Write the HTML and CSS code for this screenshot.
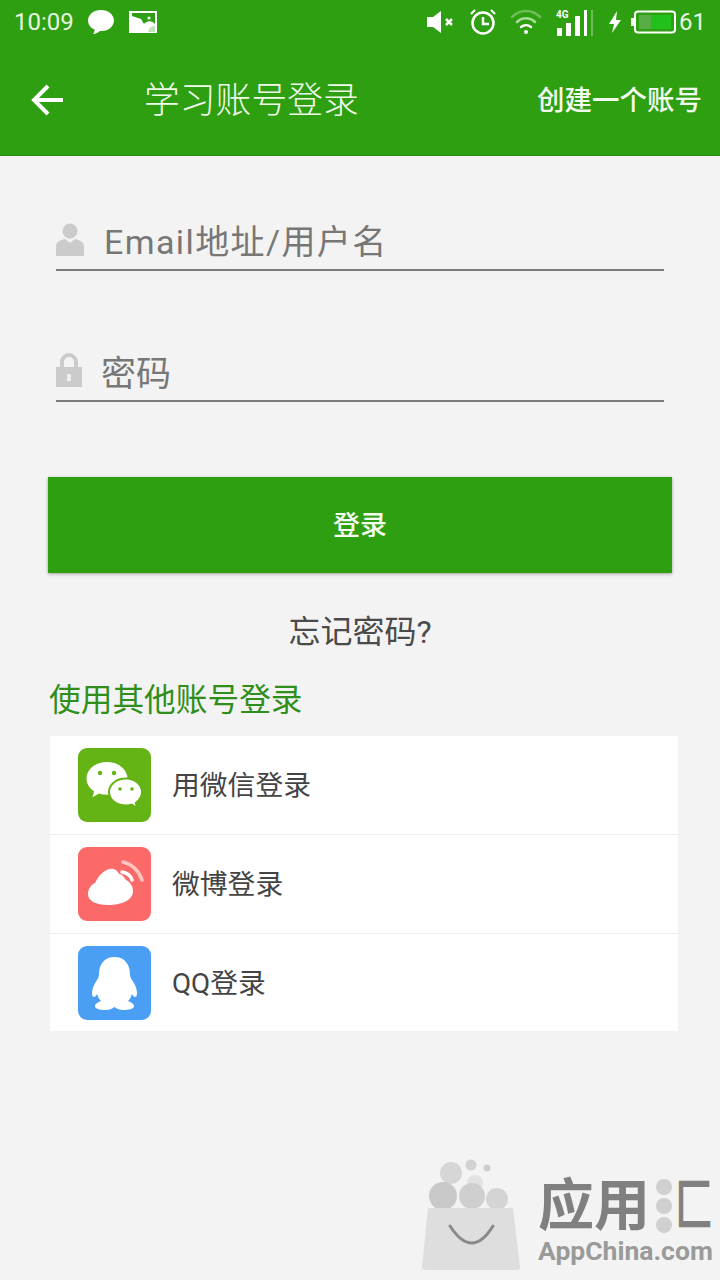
FILE: index.html

```html
<!DOCTYPE html>
<html lang="zh-CN">
<head>
    <meta charset="UTF-8">
    <meta name="viewport" content="width=device-width, initial-scale=1.0">
    <title>学习账号登录</title>
    <link rel="stylesheet" href="styles.css">
</head>
<body>
<div id="wrapper">

    <div class="header">
        <div class="status-bar">
            <span class="status-time">10:09</span>
            <svg class="status-icon" width="28" height="26" viewBox="0 0 28 26"><path d="M14 1C6.500 1 1 5.700 1 11.500c0 4 2.600 7.300 6.500 9 .3 1.600-.6 3.300-1.500 4.500 2.700-.2 5.200-1.500 6.800-3.100.6.100 1.100.1 1.700.1 7.300 0 12.500-4.700 12.500-10.500S21.500 1 14 1z" fill="#fff"/></svg>
            <svg class="status-icon status-pic" width="28" height="24" viewBox="0 0 28 24"><path d="M0 1h28v22H0z" fill="#fff"/><path d="M3 3h23v11c-4-4-8-3-11 0l-3-5-9-3z" fill="#2e9f10"/><path d="M19 22c1-4 3-6 7-6v6z" fill="#bfe3b5"/><circle cx="20" cy="8" r="1.600" fill="#fff"/></svg>
            <div class="status-right">
                <svg width="28" height="24" viewBox="0 0 28 24"><path d="M0 7h6l8-6v22l-8-6H0z" fill="#fff"/><path d="M19 9l6 6M25 9l-6 6" stroke="#fff" stroke-width="2.500"/></svg>
                <svg width="28" height="28" viewBox="0 0 28 28" fill="none" stroke="#fff"><circle cx="14" cy="15" r="10.500" stroke-width="2.500"/><path d="M14 9v7h6" stroke-width="2.500"/><path d="M2 6l4-4M26 6l-4-4" stroke-width="2"/></svg>
                <svg class="status-wifi" width="32" height="28" viewBox="0 0 32 28" fill="none" stroke-linecap="round"><path d="M2 9c8-8 20-8 28 0" stroke="#6dbd58" stroke-width="2.500"/><path d="M7 14c5-5 13-5 18 0" stroke="#a8dc9a" stroke-width="2.500"/><path d="M11 19c3-2.500 7-2.500 10 0" stroke="#fff" stroke-width="2.500"/><circle cx="16" cy="24" r="2" fill="#fff"/></svg>
                <svg class="status-signal" width="38" height="28" viewBox="0 0 38 28"><text x="0" y="10" class="signal-label">4G</text><path d="M1 20h5v8H1zM10 15h5v13h-5zM19 8h5v20h-5z" fill="#fff"/><path d="M28 2h3v26h-3z" fill="#fff"/><path d="M35 2h2v26h-2z" fill="#6dbd58"/></svg>
                <svg class="status-bolt" width="14" height="22" viewBox="0 0 14 22"><path d="M9 0L1 13h5l-2 9 9-13H8z" fill="#fff"/></svg>
                <svg class="status-battery" width="46" height="24" viewBox="0 0 46 24" fill="none"><path d="M0 8h3v8H0z" fill="#fff"/><rect x="4" y="1.500" width="40" height="21" rx="3" stroke="#fff" stroke-width="2"/><path d="M20 5h20v14H20z" fill="#22c01a"/><path d="M8 5h12v14H8z" fill="#58ad45"/></svg>
                <span class="status-battery-text">61</span>
            </div>
        </div>
        <div class="app-bar">
            <svg class="back-icon" width="34" height="34" viewBox="0 0 34 34" fill="none" stroke="#fff" stroke-width="4"><path d="M32 17H4M17 3L3 17l14 14"/></svg>
            <div class="app-title">学习账号登录</div>
            <div class="app-action">创建一个账号</div>
        </div>
    </div>

    <div class="login-form">
        <div class="field field-user">
            <svg width="28" height="33" viewBox="0 0 28 33"><circle cx="14" cy="8" r="7.500" fill="#cbcbcb"/><path d="M0 33v-9c0-5 4-7 9-8l5 4 5-4c5 1 9 3 9 8v9z" fill="#cbcbcb"/></svg>
            <span class="field-text">Email地址/用户名</span>
        </div>
        <div class="field field-pass">
            <svg width="26" height="34" viewBox="0 0 26 34"><path d="M4 15V9a9 9 0 0118 0v6h-4V9a5 5 0 00-10 0v6z" fill="#cbcbcb"/><path d="M0 14h26v20H0z" fill="#cbcbcb"/><path d="M11 21h4v7h-4z" fill="#eee"/></svg>
            <span class="field-text">密码</span>
        </div>
    </div>

    <button class="login-button"><span>登录</span></button>
    <div class="forgot">忘记密码?</div>
    <div class="other-title">使用其他账号登录</div>

    <div class="other-list">
        <div class="other-row">
            <svg class="other-icon" width="73" height="74" viewBox="0 0 73 74"><rect width="73" height="74" rx="9" fill="#63b414"/>
                <path d="M29 14c-11.600 0-20.500 7.300-20.500 16.500 0 5.200 2.900 9.700 7.500 12.700l-1.500 6 6.500-3.700c2.500.8 5.200 1.200 8 1.200 11.500 0 20.500-7.300 20.500-16.200S40.500 14 29 14z" fill="#fff"/>
                <path d="M48 30.500c-9.800 0-17 6-17 13.500s7.200 13.500 17 13.500c2 0 3.900-.3 5.700-.8l5.300 3.300-1.200-5.300c3.900-2.700 6.200-6.500 6.200-10.700 0-7.500-7.200-13.500-16-13.500z" fill="#fff" stroke="#63b414" stroke-width="2"/>
                <circle cx="22" cy="25" r="2.200" fill="#63b414"/><circle cx="36" cy="25" r="2.200" fill="#63b414"/><circle cx="42" cy="41" r="1.800" fill="#63b414"/><circle cx="54" cy="41" r="1.800" fill="#63b414"/>
            </svg>
            <span class="other-text">用微信登录</span>
        </div>
        <div class="other-row">
            <svg class="other-icon" width="73" height="74" viewBox="0 0 73 74"><rect width="73" height="74" rx="9" fill="#fb6a68"/>
                <path d="M17 36c4-8 9-13 15-14 4-1 8 2 9 5 3 0 5 3 7 6 4 2 7 6 7 11 0 9-11 14-25 14-12 0-20-4-20-11 0-5 3-9 7-11z" fill="#fff"/>
                <g fill="none" stroke-linecap="round"><path d="M44 25c5 1 9 4 10 8" stroke="#fff" stroke-width="3.500"/><path d="M45 15c9 2 16 9 19 18" stroke="#fcc4c2" stroke-width="3.500"/></g>
            </svg>
            <span class="other-text">微博登录</span>
        </div>
        <div class="other-row">
            <svg class="other-icon" width="73" height="74" viewBox="0 0 73 74"><rect width="73" height="74" rx="9" fill="#4a9ff5"/>
                <path d="M36.500 11c-10 0-15.500 7.500-15.500 17 0 2-.5 4-2 6-3 4-5 9-5 13 0 3 1 4 2 4s2-1 3-3c1 3 2 5 4 7-3 1-6 3-6 5 0 3 5 4 11 4 3 0 6-1 8.500-3 2.500 2 5.500 3 8.500 3 6 0 11-1 11-4 0-2-3-4-6-5 2-2 3-4 4-7 1 2 2 3 3 3s2-1 2-4c0-4-2-9-5-13-1.500-2-2-4-2-6 0-9.500-5.500-17-15.500-17z" fill="#fff"/>
            </svg>
            <span class="other-text">QQ登录</span>
        </div>
    </div>

    <div class="watermark">
        <svg class="watermark-bag" width="100" height="112" viewBox="0 0 100 112">
            <circle cx="29" cy="14" r="11" fill="#d6d6d6"/><circle cx="49" cy="6" r="5.500" fill="#d2d2d2"/><circle cx="65" cy="9" r="3.500" fill="#cdcdcd"/><circle cx="53" cy="24" r="8" fill="#e2e2e2"/><circle cx="21" cy="37" r="14" fill="#c9c9c9"/><circle cx="50" cy="37" r="13" fill="#cfcfcf"/><circle cx="75" cy="40" r="11" fill="#d4d4d4"/>
            <path d="M6 49h85l7 59q0 3-3 3H3q-3 0-3-3z" fill="#dedede"/>
            <path d="M28 67q22 34 43 0" fill="none" stroke="#8a8a8a" stroke-width="3" stroke-linecap="round"/>
        </svg>
        <div class="watermark-text">
            <div class="watermark-name">应用<span class="watermark-dots"><i></i><i></i><i></i></span><span class="watermark-last">匚</span></div>
            <div class="watermark-url">AppChina.com</div>
        </div>
    </div>

</div>
</body>
</html>
```

FILE: styles.css

```css
body {
    font-family: Roboto, "Noto Sans CJK SC", sans-serif;
    background-color: #f3f3f3;
    color: #444;
    margin: 0;
    padding: 0;
}
#wrapper {
    position: relative;
    height: 1280px;
    overflow: hidden;
}

.header {
    background: #2e9f10;
    height: 156px;
    border-bottom: 1px solid #2a8a12;
    box-sizing: border-box;
    color: #fff;
}
.status-bar {
    display: flex;
    align-items: center;
    height: 44px;
    padding: 0 14px;
}
.status-time {
    font-size: 24px;
    color: #e6f6e0;
    margin-right: 13px;
}
.status-pic {
    margin-left: 14px;
}
.status-right {
    margin-left: auto;
    display: flex;
    align-items: center;
    gap: 14px;
}
.status-wifi {
    margin-left: -1px;
}
.signal-label {
    font-size: 10px;
    font-weight: bold;
    fill: #fff;
}
.status-bolt {
    margin-right: -5px;
}
.status-battery-text {
    font-size: 24px;
    color: #e6f6e0;
    margin-left: -12px;
}

.app-bar {
    display: flex;
    align-items: center;
    height: 111px;
    padding: 0 18px 0 31px;
}
.back-icon {
    margin-right: 81px;
}
.app-title {
    font-size: 35.800px;
    font-weight: 300;
    color: #effaeb;
    margin-bottom: 6px;
    margin-left: -2px;
}
.app-action {
    margin-left: auto;
    margin-bottom: 4px;
    font-size: 27.500px;
    font-weight: 500;
    color: #f2fbef;
}

.login-form {
    padding: 0 56px;
    margin-top: 60px;
}
.field {
    display: flex;
    align-items: center;
    height: 47px;
    padding-bottom: 6px;
    border-bottom: 2px solid #7c7c7c;
}
.field-pass {
    margin-top: 75px;
    height: 48px;
}
.field-text {
    font-size: 34px;
    color: #777;
    margin-left: 20px;
    letter-spacing: 1.400px;
}
.field-pass .field-text {
    font-size: 35px;
    margin-left: 19px;
    letter-spacing: 0;
}

.login-button {
    display: block;
    width: 624px;
    height: 96px;
    margin: 75px 0 0 48px;
    padding: 0 0 3px;
    background: #2e9f10;
    border: none;
    color: #f4fbf0;
    font-family: inherit;
    font-size: 27px;
    font-weight: 500;
    box-shadow: 0 1px 3px rgba(0,0,0,0.35);
}
.forgot {
    text-align: center;
    font-size: 32px;
    line-height: 40px;
    color: #4a4a4a;
    margin-top: 39px;
}
.other-title {
    font-size: 31.700px;
    line-height: 42px;
    color: #2f8f1a;
    margin: 28px 0 0 49px;
}

.other-list {
    width: 628px;
    margin: 14px 0 0 50px;
    background: #fff;
}
.other-row {
    display: flex;
    align-items: center;
    height: 98px;
    padding-left: 28px;
    border-bottom: 1px solid #ececec;
}
.other-row:last-child {
    border-bottom: none;
    height: 97px;
}
.other-text {
    font-size: 27.800px;
    color: #444;
    margin-left: 21px;
    margin-bottom: 4px;
}

.watermark {
    position: absolute;
    left: 422px;
    top: 1159px;
    display: flex;
    align-items: flex-start;
}
.watermark-text {
    flex: none;
    margin-left: 16px;
    margin-top: 16px;
}
.watermark-name {
    display: flex;
    align-items: center;
    font-size: 56px;
    font-weight: bold;
    line-height: 62px;
    color: #808080;
    white-space: nowrap;
}
.watermark-dots {
    display: flex;
    flex-direction: column;
    gap: 3px;
    margin: 0 3px 0 6px;
}
.watermark-dots i {
    display: block;
    width: 16px;
    height: 16px;
    border-radius: 50%;
    background: #d0d0d0;
}
.watermark-last {
    display: block;
    width: 32px;
    transform: scaleX(0.68);
    transform-origin: left center;
}
.watermark-url {
    font-size: 26.500px;
    font-weight: bold;
    line-height: 28px;
    color: #9a9a9a;
    white-space: nowrap;
}
```
